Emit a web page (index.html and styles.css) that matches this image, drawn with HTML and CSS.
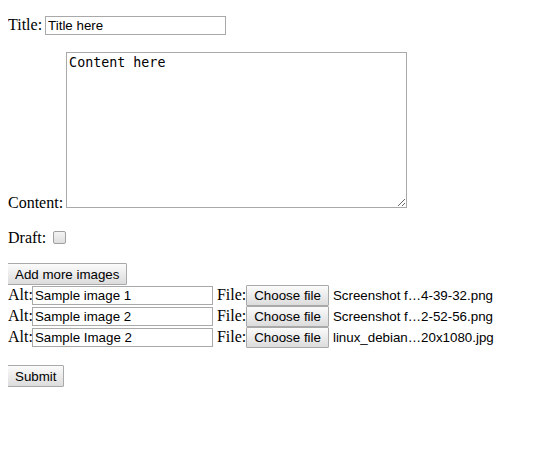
FILE: index.html
```html
<!DOCTYPE html>
<html>
<head>
<meta charset="utf-8">
<link rel="stylesheet" href="styles.css">
</head>
<body class="page">
<form class="form">
  <p class="row">Title: <input class="text" type="text" value="Title here"></p>
  <p class="row row-content">Content: <textarea class="area" cols="40" rows="10">Content here</textarea></p>
  <p class="row">Draft: <input class="check" type="checkbox"></p>
  <div class="images">
    <button type="button" class="btn btn-block">Add more images</button>
    <div class="alt-row">Alt:<input class="text" type="text" value="Sample image 1"> File:<span class="file"><button type="button" class="btn file-btn">Choose file</button><span class="file-name">Screenshot f…4-39-32.png</span></span></div>
    <div class="alt-row">Alt:<input class="text" type="text" value="Sample image 2"> File:<span class="file"><button type="button" class="btn file-btn">Choose file</button><span class="file-name">Screenshot f…2-52-56.png</span></span></div>
    <div class="alt-row">Alt:<input class="text" type="text" value="Sample Image 2"> File:<span class="file"><button type="button" class="btn file-btn">Choose file</button><span class="file-name">linux_debian…20x1080.jpg</span></span></div>
  </div>
  <p class="row"><button type="submit" class="btn btn-block">Submit</button></p>
</form>
</body>
</html>
```
FILE: styles.css
```css
.page {
  margin: 8px;
  font-family: "Liberation Serif", serif;
  font-size: 16px;
  color: #000;
  background: #fff;
}
.form { margin: 0; padding-top: 8px; }
.row { margin: 0 0 16px; }
.row-content { padding-top: 1px; margin-bottom: 17px; }
.images { margin: 0 0 17px; }
.text {
  font-family: "Liberation Sans", sans-serif;
  font-size: 13.333px;
  width: 175px;
  height: 15px;
  padding: 1px 2px;
  border: 1px solid #a9a9a9;
  margin: 0 0 0 -1px;
}
.area {
  font-family: "DejaVu Sans Mono", monospace;
  font-size: 13.333px;
  width: 335px;
  height: 150px;
  padding: 2px;
  border: 1px solid #a9a9a9;
  margin: 0 0 0 -1px;
  resize: both;
}
.check {
  appearance: none;
  -webkit-appearance: none;
  width: 13px;
  height: 13px;
  margin: 0 3px;
  border: 1px solid #a0a0a0;
  border-radius: 2px;
  background: linear-gradient(#f4f4f4, #dedede);
  vertical-align: -1px;
}
.btn {
  font-family: "Liberation Sans", sans-serif;
  font-size: 13.333px;
  padding: 1px 7px;
  margin: 0;
  border: 1px solid #a9a9a9;
  border-radius: 1px;
  background: linear-gradient(#fbfbfb, #dcdcdc);
  color: #000;
  height: 22px;
}
.btn-block { margin-left: -1px; }
.file-btn { height: 21px; }
.file-name {
  font-family: "Liberation Sans", sans-serif;
  font-size: 13.333px;
  margin-left: 4px;
}
.alt-row { height: 21px; }
```
